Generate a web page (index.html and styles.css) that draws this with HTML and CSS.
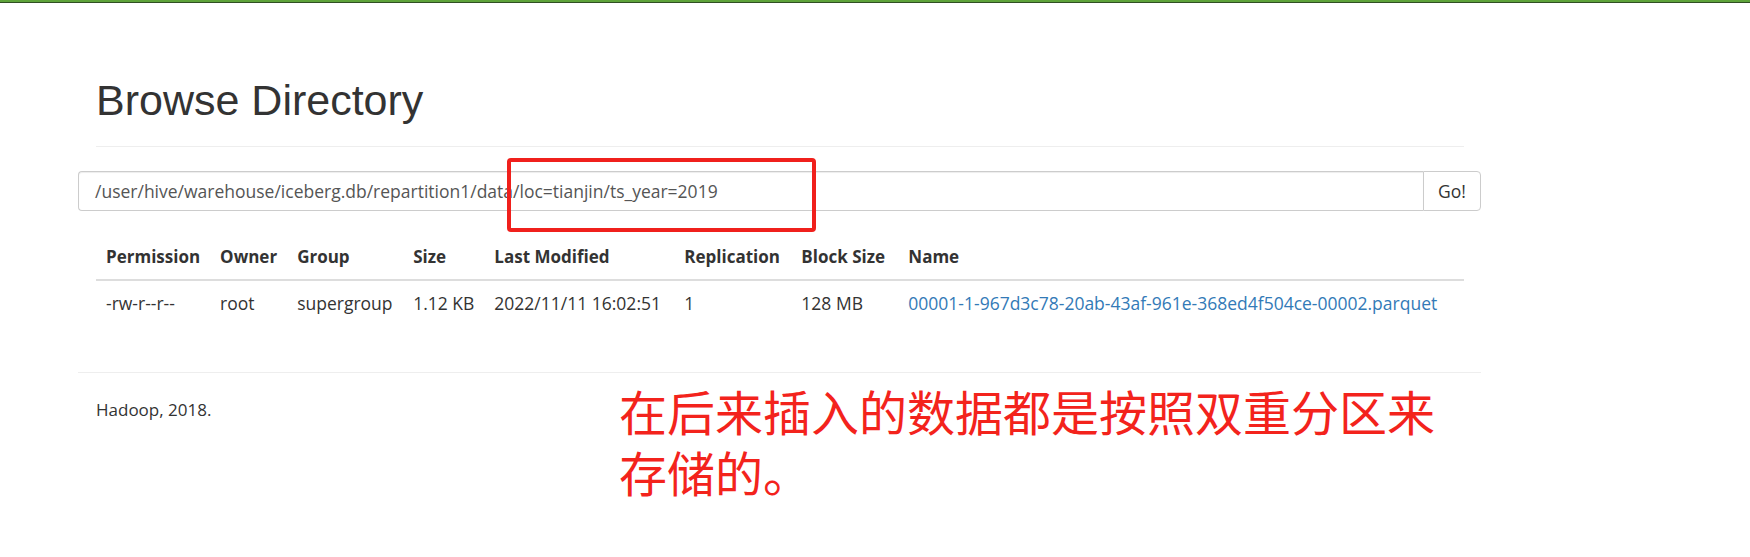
FILE: index.html
```html
<!DOCTYPE html>
<html lang="en">
<head>
<meta charset="utf-8">
<title>Browsing HDFS</title>
<link rel="stylesheet" href="styles.css">
</head>
<body>
<div class="topbar"></div>
<div class="container">
  <div class="page-header">
    <h1>Browse Directory</h1>
  </div>
  <div class="input-group">
    <div class="path-input">/user/hive/warehouse/iceberg.db/repartition1/data/loc=tianjin/ts_year=2019</div>
    <div class="go-btn">Go!</div>
  </div>
  <table class="listing">
    <thead>
      <tr>
        <th class="c-perm">Permission</th>
        <th class="c-owner">Owner</th>
        <th class="c-group">Group</th>
        <th class="c-size">Size</th>
        <th class="c-mod">Last Modified</th>
        <th class="c-rep">Replication</th>
        <th class="c-block">Block Size</th>
        <th class="c-name">Name</th>
      </tr>
    </thead>
    <tbody>
      <tr>
        <td>-rw-r--r--</td>
        <td>root</td>
        <td>supergroup</td>
        <td>1.12 KB</td>
        <td>2022/11/11 16:02:51</td>
        <td>1</td>
        <td>128 MB</td>
        <td><a class="file-link" href="#">00001-1-967d3c78-20ab-43af-961e-368ed4f504ce-00002.parquet</a></td>
      </tr>
    </tbody>
  </table>
  <hr class="footer-rule">
  <div class="footer-text">Hadoop, 2018.</div>
</div>
<div class="mark-box"></div>
<div class="annotation">
  <div class="annotation-line">在后来插入的数据都是按照双重分区来</div>
  <div class="annotation-line">存储的。</div>
</div>
</body>
</html>
```
FILE: styles.css
```css
html, body {
  margin: 0;
  padding: 0;
  background: #ffffff;
}
body {
  font-family: "Open Sans", "Noto Sans", "Noto Sans CJK SC", sans-serif;
  font-size: 17.5px;
  color: #333333;
  position: relative;
  height: 557px;
  overflow: hidden;
}
.topbar {
  height: 2px;
  background: #5ea33a;
  border-bottom: 1px solid #2f4f22;
}
.container {
  margin-left: 78px;
  width: 1403px;
}
.page-header {
  margin: 74px 17px 0 18px;
  padding-bottom: 22px;
  border-bottom: 1px solid #eeeeee;
}
.page-header h1 {
  margin: 0;
  font-family: "Liberation Sans", Arial, sans-serif;
  font-weight: 400;
  font-size: 43px;
  line-height: 47px;
  color: #333333;
}
.input-group {
  margin-top: 24px;
  display: flex;
  height: 40px;
  box-sizing: border-box;
}
.path-input {
  flex: 1;
  box-sizing: border-box;
  border: 1px solid #cccccc;
  border-right: none;
  border-radius: 4px 0 0 4px;
  padding: 0 16px;
  display: flex;
  align-items: center;
  color: #555555;
  font-size: 17.5px;
  box-shadow: inset 0 1px 1px rgba(0,0,0,0.075);
}
.go-btn {
  width: 58px;
  box-sizing: border-box;
  border: 1px solid #cccccc;
  border-radius: 0 4px 4px 0;
  display: flex;
  align-items: center;
  justify-content: center;
  color: #333333;
  background: #ffffff;
  font-size: 17.5px;
}
.listing {
  margin: 24px 17px 0 18px;
  width: 1368px;
  border-collapse: collapse;
  border-spacing: 0;
}
.listing th,
.listing td {
  text-align: left;
  padding: 9px 10px;
  line-height: 26px;
  white-space: nowrap;
  vertical-align: top;
}
.listing th {
  font-weight: 700;
  font-size: 17px;
  border-bottom: 2px solid #dddddd;
}
.c-perm { width: 94px; }
.c-owner { width: 57px; }
.c-group { width: 96px; }
.c-size { width: 61px; }
.c-mod { width: 170px; }
.c-rep { width: 97px; }
.c-block { width: 87px; }
.file-link {
  color: #337ab7;
  text-decoration: none;
}
.footer-rule {
  margin: 47px 0 0 0;
  border: 0;
  border-top: 1px solid #eeeeee;
  height: 0;
}
.footer-text {
  margin: 25px 0 0 18px;
  width: fit-content;
  line-height: 24px;
  font-size: 17px;
}
.mark-box {
  position: absolute;
  left: 507px;
  top: 158px;
  width: 309px;
  height: 74px;
  box-sizing: border-box;
  border: 4px solid #f0201c;
  border-radius: 4px;
}
.annotation {
  position: absolute;
  left: 619px;
  top: 380px;
  font-family: "Noto Sans CJK SC", "Noto Sans", sans-serif;
  font-size: 48px;
  color: #f3231c;
  white-space: nowrap;
}
.annotation-line {
  height: 61px;
  line-height: 61px;
}
```
